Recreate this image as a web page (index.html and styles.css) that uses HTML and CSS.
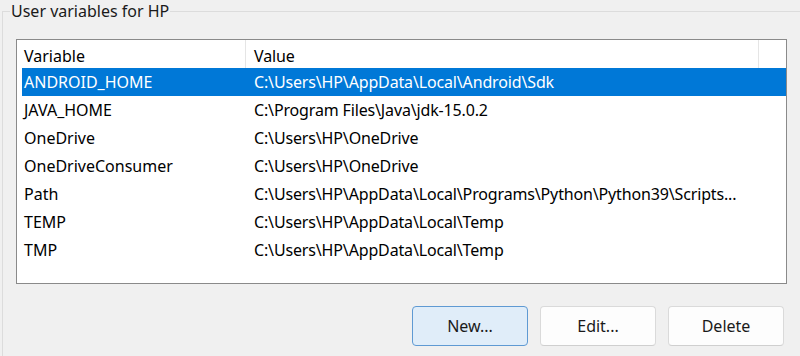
FILE: index.html
```html
<!DOCTYPE html>
<html lang="en">
<head>
    <meta charset="UTF-8">
    <title>Environment Variables</title>
    <link rel="stylesheet" href="styles.css">
</head>
<body>
    <fieldset class="group">
        <legend>User variables for HP</legend>

        <div class="list">
            <div class="list-head">
                <div class="col col-name">Variable</div>
                <div class="col col-value">Value</div>
            </div>
            <div class="row selected">
                <div class="col col-name">ANDROID_HOME</div>
                <div class="col col-value">C:\Users\HP\AppData\Local\Android\Sdk</div>
            </div>
            <div class="row">
                <div class="col col-name">JAVA_HOME</div>
                <div class="col col-value">C:\Program Files\Java\jdk-15.0.2</div>
            </div>
            <div class="row">
                <div class="col col-name">OneDrive</div>
                <div class="col col-value">C:\Users\HP\OneDrive</div>
            </div>
            <div class="row">
                <div class="col col-name">OneDriveConsumer</div>
                <div class="col col-value">C:\Users\HP\OneDrive</div>
            </div>
            <div class="row">
                <div class="col col-name">Path</div>
                <div class="col col-value">C:\Users\HP\AppData\Local\Programs\Python\Python39\Scripts...</div>
            </div>
            <div class="row">
                <div class="col col-name">TEMP</div>
                <div class="col col-value">C:\Users\HP\AppData\Local\Temp</div>
            </div>
            <div class="row">
                <div class="col col-name">TMP</div>
                <div class="col col-value">C:\Users\HP\AppData\Local\Temp</div>
            </div>
        </div>

        <div class="actions">
            <button class="btn btn-default">New...</button>
            <button class="btn">Edit...</button>
            <button class="btn">Delete</button>
        </div>
    </fieldset>
</body>
</html>
```

FILE: styles.css
```css
:root {
    --bg: #f0f0f0;
    --group-line: #dcdcdc;
    --list-border: #8a8a8a;
    --select: #0078d7;
    --text: #000;
}

body {
    margin: 0;
    background: var(--bg);
    font-family: 'Noto Sans', 'Open Sans', sans-serif;
    font-size: 16px;
    color: var(--text);
    overflow: hidden;
}

.group {
    margin: 0 0 0 2px;
    padding: 0 0 10px 13px;
    border: 1px solid var(--group-line);
    border-right: none;
    border-bottom: none;
}

.group legend {
    margin-left: -6px;
    padding: 0 1px;
    line-height: 22px;
    font-size: 16px;
    color: #1a1a1a;
}

.list {
    margin-top: 17px;
    padding-left: 5px;
    box-sizing: border-box;
    width: 771px;
    height: 245px;
    background: #fff;
    border: 1px solid var(--list-border);
}

.list-head,
.row {
    display: grid;
    grid-template-columns: 224px 513px;
}

.list-head {
    height: 28px;
}

.list-head .col {
    height: 100%;
    display: flex;
    align-items: center;
    padding-top: 3px;
    box-sizing: border-box;
    border-right: 1px solid #e5e5e5;
}

.row {
    height: 28px;
    align-items: center;
}

.col {
    white-space: nowrap;
    overflow: hidden;
}

.col-name {
    padding-left: 2px;
}

.col-value {
    padding-left: 8px;
    letter-spacing: -0.15px;
}

.row.selected {
    background: var(--select);
    color: #fff;
}

.actions {
    display: flex;
    justify-content: flex-end;
    gap: 12px;
    width: 768px;
    margin-top: 22px;
}

.btn {
    width: 116px;
    height: 40px;
    font-family: inherit;
    font-size: 16px;
    color: #1a1a1a;
    background: #fdfdfd;
    border: 1px solid #dadada;
    border-bottom-color: #cfcfcf;
    border-radius: 4px;
}

.btn-default {
    background: #e0edf9;
    border-color: #5f9ad3;
}
```
